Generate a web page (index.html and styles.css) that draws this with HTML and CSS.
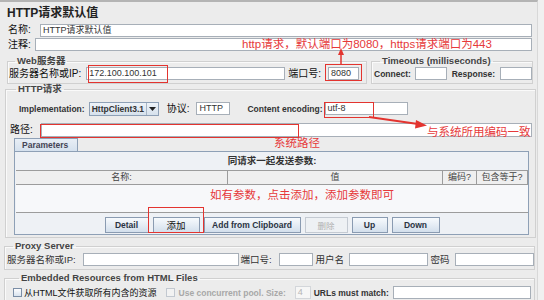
FILE: index.html
```html
<!DOCTYPE html>
<html lang="zh-CN">
<head>
    <meta charset="UTF-8">
    <title>HTTP请求默认值</title>
    <link rel="stylesheet" href="styles.css">
</head>
<body>
    <div class="window">
        <h1 class="title">HTTP请求默认值</h1>

        <div class="field-row name-row">
            <label class="lbl">名称:</label>
            <div class="input">HTTP请求默认值</div>
        </div>
        <div class="field-row comment-row">
            <label class="lbl">注释:</label>
            <div class="input"></div>
        </div>

        <div class="server-row">
            <fieldset class="group web">
                <legend>Web服务器</legend>
                <div class="line">
                    <label class="lbl">服务器名称或IP:</label>
                    <div class="input ip">172.100.100.101</div>
                    <label class="lbl port-lbl">端口号:</label>
                    <div class="input port">8080</div>
                </div>
            </fieldset>
            <fieldset class="group timeouts">
                <legend>Timeouts (milliseconds)</legend>
                <div class="line">
                    <label class="lbl en">Connect:</label>
                    <div class="input t-connect"></div>
                    <label class="lbl en">Response:</label>
                    <div class="input t-response"></div>
                </div>
            </fieldset>
        </div>

        <fieldset class="group http">
            <legend>HTTP请求</legend>
            <div class="line impl-row">
                <label class="lbl en">Implementation:</label>
                <div class="combo">
                    <span class="combo-value">HttpClient3.1</span>
                    <span class="combo-btn"><svg width="7" height="4" viewBox="0 0 7 4"><path d="M0 0h7L3.5 4z" fill="#222"/></svg></span>
                </div>
                <label class="lbl proto-lbl">协议:</label>
                <div class="input proto">HTTP</div>
                <label class="lbl en enc-lbl">Content encoding:</label>
                <div class="input enc">utf-8</div>
            </div>
            <div class="line path-row">
                <label class="lbl">路径:</label>
                <div class="input path"></div>
            </div>

            <div class="tabs">
                <div class="tab active">Parameters</div>
            </div>
            <div class="tab-panel">
                <div class="caption">同请求一起发送参数:</div>
                <div class="table">
                    <div class="thead">
                        <div class="th c-name">名称:</div>
                        <div class="th c-value">值</div>
                        <div class="th c-enc">编码?</div>
                        <div class="th c-eq">包含等于?</div>
                    </div>
                    <div class="tbody"></div>
                </div>
                <div class="buttons">
                    <button class="btn b-detail">Detail</button>
                    <button class="btn b-add">添加</button>
                    <button class="btn b-clip">Add from Clipboard</button>
                    <button class="btn b-del" disabled>删除</button>
                    <button class="btn b-up">Up</button>
                    <button class="btn b-down">Down</button>
                </div>
            </div>
        </fieldset>

        <fieldset class="group proxy">
            <legend>Proxy Server</legend>
            <div class="line">
                <label class="lbl plain">服务器名称或IP:</label>
                <div class="input p-host"></div>
                <label class="lbl plain">端口号:</label>
                <div class="input p-port"></div>
                <label class="lbl plain">用户名</label>
                <div class="input p-user"></div>
                <label class="lbl plain">密码</label>
                <div class="input p-pass"></div>
            </div>
        </fieldset>

        <fieldset class="group embedded">
            <legend>Embedded Resources from HTML Files</legend>
            <div class="line">
                <span class="check"></span>
                <label class="lbl embed-lbl">从HTML文件获取所有内含的资源</label>
                <span class="check disabled"></span>
                <label class="lbl en off">Use concurrent pool. Size:</label>
                <div class="input pool">4</div>
                <label class="lbl en">URLs must match:</label>
                <div class="input urls"></div>
            </div>
        </fieldset>

        <!-- red annotations drawn over the screenshot -->
        <div class="mark m-ip"></div>
        <div class="mark m-port"></div>
        <div class="mark m-enc"></div>
        <div class="mark m-path"></div>
        <div class="mark m-add"></div>
        <div class="note n-port">http请求，默认端口为8080，https请求端口为443</div>
        <div class="note n-enc">与系统所用编码一致</div>
        <div class="note n-path">系统路径</div>
        <div class="note n-param">如有参数，点击添加，添加参数即可</div>
        <svg class="arrows" width="544" height="300" viewBox="0 0 544 300">
            <line x1="341" y1="64" x2="341" y2="54" stroke="#e3342f" stroke-width="1.5"/>
            <path d="M341 48 L338 55 L344 55 Z" fill="#e3342f"/>
            <line x1="369" y1="117" x2="418" y2="124" stroke="#e3342f" stroke-width="2"/>
            <path d="M427 125.5 L416 120 L415 128.5 Z" fill="#e3342f"/>
        </svg>
    </div>
</body>
</html>
```

FILE: styles.css
```css
* {
    margin: 0;
    padding: 0;
    box-sizing: border-box;
}
html, body {
    width: 100%;
    height: 100%;
    overflow: hidden;
    background: #f0f0f0;
}
body {
    font-family: "Liberation Sans", "Noto Sans CJK SC", sans-serif;
    color: #333;
}
.window {
    position: relative;
    width: 538px;
    height: 300px;
    background: #ececec;
    border-top: 2px solid #b4b4b4;
    border-right: 1px solid #d8d8d8;
}
.title {
    height: 19px;
    padding: 4px 0 0 7px;
    font-size: 12px;
    line-height: 14px;
    font-weight: bold;
    color: #222;
}

/* generic label + input */
.lbl {
    font-size: 10px;
    line-height: 12px;
    font-weight: normal;
    white-space: nowrap;
    color: #111;
}
.lbl.en {
    font-size: 8.5px;
    font-weight: bold;
    color: #333;
}
.lbl.plain {
    font-size: 9.5px;
    color: #333;
}
.lbl.off {
    color: #a8a8a8;
}
.input {
    height: 13px;
    background: #fff;
    border: 1px solid #a7afb8;
    font-size: 9px;
    line-height: 11px;
    padding-left: 2px;
    color: #333;
    white-space: nowrap;
    overflow: hidden;
}
.line {
    display: flex;
    align-items: center;
}

.field-row {
    display: flex;
    align-items: center;
    margin: 0 5px 0 8px;
}
.name-row {
    margin-top: 2px;
    height: 14px;
}
.name-row .lbl {
    width: 32px;
}
.comment-row {
    margin-top: 1px;
    height: 13px;
}
.comment-row .lbl {
    width: 27px;
}
.field-row .input {
    flex: 1;
    height: 13px;
}

/* titled groups */
.group {
    border: 1px solid #d0d0d0;
    box-shadow: inset 1px 1px 0 #fafafa;
    min-width: 0;
}
.group legend {
    font-size: 9.5px;
    line-height: 10px;
    font-weight: bold;
    color: #444;
    padding: 0 2px;
    margin-left: 6px;
}

.server-row {
    display: flex;
    gap: 4px;
    margin: 5px 4px 0 7px;
}
.web {
    width: 360px;
    padding: 1px 0 3px 1px;
}
.web .ip {
    width: 199px;
    margin-left: 5px;
}
.web .port-lbl {
    margin-left: 3px;
}
.web .port {
    width: 31px;
    margin-left: 7px;
}
.timeouts {
    flex: 1;
    padding: 1px 0 3px 2px;
}
.timeouts .t-connect {
    width: 33px;
    margin: 0 5px 0 4px;
}
.timeouts .t-response {
    width: 33px;
    margin-left: 5px;
}

/* HTTP request */
.http {
    margin: 0 1px 0 5px;
    padding: 8px 0 2px 4px;
}
.impl-row {
    height: 13px;
    padding-left: 9px;
}
.combo {
    display: flex;
    width: 70px;
    height: 14px;
    margin-left: 4px;
    border: 1px solid #8ea0b6;
    background: linear-gradient(#eef3f8, #d6e1ec);
}
.combo-value {
    flex: 1;
    font-size: 8.5px;
    font-weight: bold;
    line-height: 12px;
    padding-left: 2px;
    color: #333;
}
.combo-btn {
    width: 12px;
    display: flex;
    align-items: center;
    justify-content: center;
    border-left: 1px solid #a8b6c6;
}
.proto-lbl {
    margin-left: 8px;
}
.proto {
    width: 34px;
    margin-left: 7px;
}
.enc-lbl {
    margin-left: 17px;
}
.enc {
    width: 83px;
    margin-left: 2px;
}
.path-row {
    margin-top: 7px;
    height: 15px;
}
.path-row .lbl {
    width: 31px;
}
.path {
    flex: 1;
    height: 14px;
    margin-right: 3px;
}

/* Parameters tab */
.tabs {
    display: flex;
    margin: 1px 0 0 4px;
}
.tab {
    width: 64px;
    height: 13px;
    font-size: 8.5px;
    line-height: 12px;
    font-weight: bold;
    color: #445;
    padding-left: 7px;
    border: 1px solid #8ea0b6;
    border-bottom: none;
    background: linear-gradient(#e8eef5, #d5e1ee);
}
.tab-panel {
    margin: 0 6px 0 4px;
    border: 1px solid #8ea0b6;
    background: #eef1f5;
    padding: 0 0 1px 1px;
}
.caption {
    height: 18px;
    text-align: center;
    font-size: 9.5px;
    line-height: 18px;
    font-weight: bold;
    color: #333;
}
.table {
    background: #fff;
    border-top: 1px solid #9c9c9c;
    border-bottom: 1px solid #9c9c9c;
}
.thead {
    display: flex;
    height: 14px;
    background: #efefef;
    border-bottom: 1px solid #9c9c9c;
}
.th {
    font-size: 9px;
    line-height: 13px;
    text-align: center;
    border-right: 1px solid #9c9c9c;
    color: #444;
}
.c-name { width: 212px; }
.c-value { width: 215px; }
.c-enc { width: 34px; }
.c-eq { flex: 1; }
.tbody {
    height: 27px;
    background: #f7f8fa;
}
.buttons {
    display: flex;
    justify-content: center;
    gap: 4px;
    margin-top: 4px;
    height: 16px;
}
.btn {
    height: 16px;
    font-family: inherit;
    font-size: 8.5px;
    font-weight: bold;
    color: #2a3342;
    border: 1px solid #8a9bb1;
    background: linear-gradient(#f7fafd, #d3dfec);
}
.btn:disabled {
    color: #b0b0b0;
    border-color: #c4cad2;
    background: #eef1f4;
    font-weight: normal;
}
.b-detail { width: 44px; }
.b-add { width: 47px; font-size: 9.5px; font-weight: normal; color: #111; }
.b-clip { width: 97px; }
.b-del { width: 43px; }
.b-up { width: 36px; }
.b-down { width: 48px; }

/* proxy */
.proxy {
    margin: 3px 2px 0 4px;
    padding: 2px 0 3px 2px;
}
.p-host { width: 157px; margin: 0 2px 0 7px; }
.p-port { width: 34px; margin: 0 3px 0 7px; }
.p-user { width: 79px; margin: 0 3px 0 5px; }
.p-pass { width: 80px; margin-left: 5px; }

/* embedded resources */
.embedded {
    margin: 3px 2px 0 4px;
    padding: 3px 0 6px 8px;
}
.check {
    width: 9px;
    height: 9px;
    border: 1px solid #7b8ea6;
    background: linear-gradient(#fdfdfe, #d9e3ee);
}
.check.disabled {
    border-color: #c2c8d0;
    background: #f2f2f2;
    margin-left: 9px;
}
.embed-lbl {
    font-size: 9px;
    margin-left: 2px;
}
.off {
    margin-left: 4px;
}
.pool {
    width: 16px;
    margin: 0 3px 0 9px;
    background: #f6f6f6;
    border-color: #d3d6da;
    color: #b5b5b5;
}
.urls {
    width: 138px;
    margin-left: 4px;
}

/* red annotations */
.mark {
    position: absolute;
    border: 1px solid #e3342f;
}
.m-ip { left: 88px; top: 63px; width: 80px; height: 18px; }
.m-port { left: 325px; top: 62px; width: 37px; height: 17px; }
.m-enc { left: 324px; top: 100px; width: 50px; height: 16px; }
.m-path { left: 40px; top: 122px; width: 259px; height: 14px; }
.m-add { left: 148px; top: 205px; width: 56px; height: 26px; }
.note {
    position: absolute;
    font-size: 11.5px;
    line-height: 14px;
    color: #e6393a;
    white-space: nowrap;
}
.n-port { left: 242px; top: 35px; }
.n-enc { left: 427px; top: 123px; }
.n-path { left: 274px; top: 134px; }
.n-param { left: 210px; top: 186px; }
.arrows {
    position: absolute;
    left: 0;
    top: -2px;
    pointer-events: none;
}
```
